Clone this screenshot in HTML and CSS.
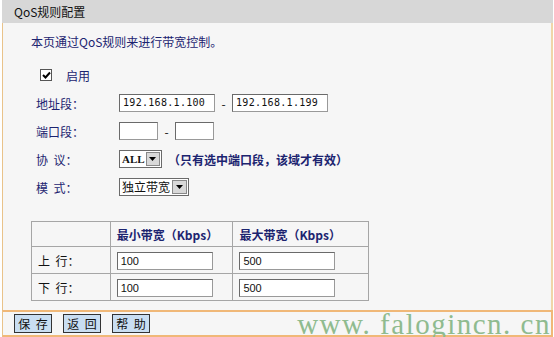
FILE: index.html
```html
<!DOCTYPE html>
<html>
<head>
<meta charset="utf-8">
<link rel="stylesheet" href="styles.css">
</head>
<body>
<div class="page">
  <div class="title">QoS规则配置</div>
  <div class="panel">
    <p class="desc">本页通过QoS规则来进行带宽控制。</p>
    <div class="form">
      <div class="row check-row">
        <span class="checkbox"><svg width="9" height="9" viewBox="0 0 9 9"><path d="M1 4 L3.5 6.5 L8 1.5" fill="none" stroke="#000" stroke-width="2"/></svg></span>
        <span class="label-text">启用</span>
      </div>
      <div class="row">
        <span class="label">地址段：</span>
        <span class="input ip">192.168.1.100</span>
        <span class="dash">-</span>
        <span class="input ip">192.168.1.199</span>
      </div>
      <div class="row">
        <span class="label">端口段：</span>
        <span class="input port"></span>
        <span class="dash">-</span>
        <span class="input port"></span>
      </div>
      <div class="row">
        <span class="label">协&nbsp;&nbsp;议：</span>
        <span class="select sel-all"><span class="sel-text mono">ALL</span><span class="sel-btn"><svg width="7" height="4" viewBox="0 0 7 4"><path d="M0 0 H7 L3.5 4Z" fill="#000"/></svg></span></span>
        <span class="hint">（只有选中端口段，该域才有效）</span>
      </div>
      <div class="row">
        <span class="label">模&nbsp;&nbsp;式：</span>
        <span class="select sel-mode"><span class="sel-text">独立带宽</span><span class="sel-btn"><svg width="7" height="4" viewBox="0 0 7 4"><path d="M0 0 H7 L3.5 4Z" fill="#000"/></svg></span></span>
      </div>
    </div>
    <table class="bw">
      <tr class="head">
        <td class="c1"></td>
        <td class="c2">最小带宽（Kbps）</td>
        <td class="c3">最大带宽（Kbps）</td>
      </tr>
      <tr>
        <td class="c1">上&nbsp;&nbsp;行：</td>
        <td class="c2"><span class="input cell">100</span></td>
        <td class="c3"><span class="input cell">500</span></td>
      </tr>
      <tr>
        <td class="c1">下&nbsp;&nbsp;行：</td>
        <td class="c2"><span class="input cell">100</span></td>
        <td class="c3"><span class="input cell">500</span></td>
      </tr>
    </table>
  </div>
  <div class="footer">
    <span class="btn">保&nbsp;&nbsp;存</span>
    <span class="btn">返&nbsp;&nbsp;回</span>
    <span class="btn">帮&nbsp;&nbsp;助</span>
    <span class="watermark">www. falogincn. cn</span>
  </div>
</div>
</body>
</html>
```
FILE: styles.css
```css
* { box-sizing: border-box; }
html, body { margin: 0; padding: 0; background: #ffffff; }
body {
  font-family: "Noto Sans CJK SC", "Liberation Sans", sans-serif;
  font-size: 12px;
  color: #1c2470;
}
.page {
  width: 554px;
  height: 337px;
  padding-left: 2px;
  padding-right: 1px;
  display: flex;
  flex-direction: column;
}
.title {
  height: 23px;
  line-height: 23px;
  background: #d7d7d7;
  color: #111;
  padding-left: 12px;
  font-size: 12px;
}
.panel {
  flex: 0 0 287px;
  background: #f6f6f6;
  border-left: 1px solid #e9c38a;
  border-right: 2px solid #f0d6a8;
  padding-left: 28px;
  padding-top: 10px;
}
.desc {
  margin: 0;
  height: 18px;
  line-height: 18px;
  color: #1c2470;
}
.form {
  margin-top: 10px;
  display: flex;
  flex-direction: column;
}
.row {
  height: 28px;
  display: flex;
  align-items: center;
}
.check-row { padding-left: 9px; }
.checkbox {
  width: 12px;
  height: 12px;
  border: 1px solid #555;
  background: #fff;
  display: inline-flex;
  align-items: center;
  justify-content: center;
}
.label-text { margin-left: 14px; }
.label {
  width: 88px;
  padding-left: 5px;
}
.input {
  display: inline-block;
  height: 18px;
  line-height: 16px;
  background: #fff;
  border: 1px solid #6a6a6a;
  border-right-color: #999;
  border-bottom-color: #999;
  color: #111;
  font-family: "DejaVu Sans Mono", monospace;
  font-size: 10px;
  padding-left: 3px;
}
.ip { width: 96px; letter-spacing: 0.3px; }
.port { width: 39px; }
.dash {
  width: 17px;
  text-align: center;
  color: #111;
}
.select {
  display: inline-flex;
  align-items: stretch;
  height: 18px;
  background: #fff;
  border: 1px solid #6a6a6a;
}
.sel-all { width: 43px; }
.sel-mode { width: 70px; }
.sel-text {
  flex: 1;
  line-height: 16px;
  padding-left: 2px;
  color: #111;
  font-size: 12px;
}
.mono { font-family: "Liberation Serif", serif; font-size: 11px; font-weight: bold; }
.sel-btn {
  width: 15px;
  margin: 1px;
  background: #d8d8d8;
  border: 1px solid #888;
  display: flex;
  align-items: center;
  justify-content: center;
}
.hint {
  margin-left: 6px;
  font-weight: bold;
  font-size: 12px;
}
.bw {
  margin-top: 20px;
  border-collapse: collapse;
  width: 338px;
}
.bw td {
  border: 1px solid #a6a6a6;
  height: 27px;
  padding: 0 0 0 6px;
  color: #1c2470;
}
.bw .head td { height: 25px; font-weight: bold; }
.bw .c1 { width: 79px; color: #111; }
.bw .c2 { width: 123px; }
.bw .c3 { width: 136px; }
.cell { width: 96px; height: 18px; font-family: "Liberation Sans", sans-serif; font-size: 11px; }
.footer {
  flex: 1;
  background: #f6f6f6;
  border-top: 2px solid #f0b878;
  border-left: 1px solid #e9c38a;
  border-right: 2px solid #f0b878;
  border-bottom: 2px solid #f0b878;
  display: flex;
  align-items: center;
  padding-left: 11px;
  gap: 11px;
}
.btn {
  width: 38px;
  height: 19px;
  line-height: 17px;
  text-align: center;
  background: #c9def2;
  border: 1px solid #333;
  color: #111;
  font-size: 12px;
  white-space: nowrap;
}
.watermark {
  margin-left: auto;
  font-family: "Liberation Serif", serif;
  font-size: 29px;
  letter-spacing: 1.5px;
  color: #8fbb8f;
  line-height: 20px;
  white-space: nowrap;
}
```
